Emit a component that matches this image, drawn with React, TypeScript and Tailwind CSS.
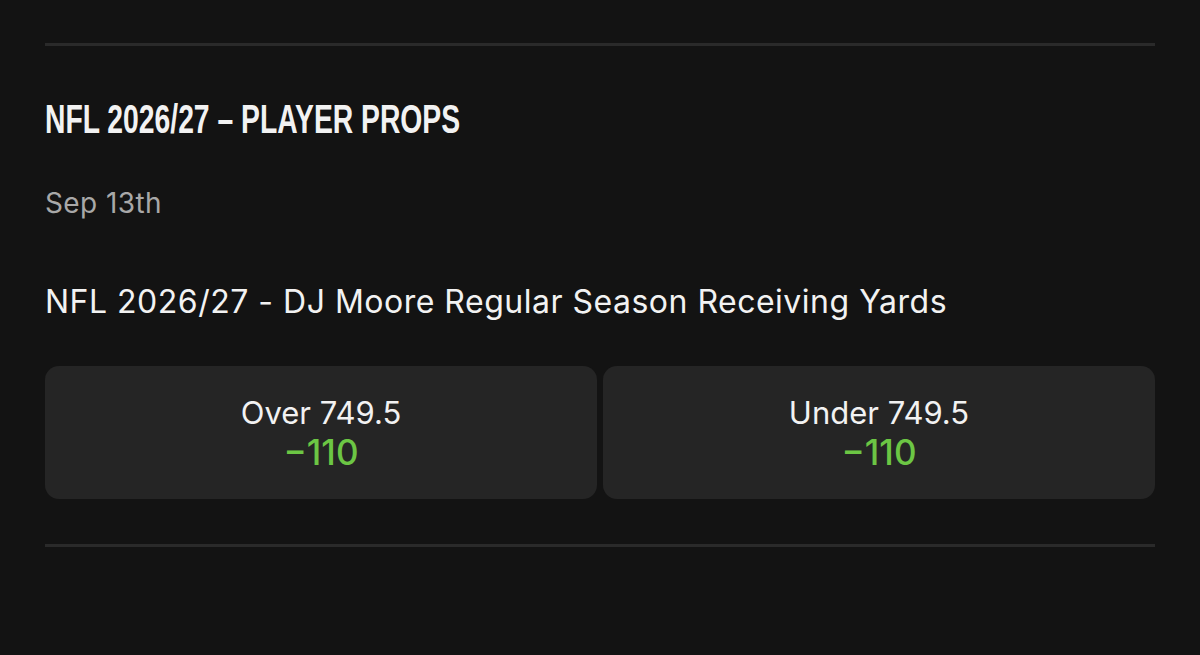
export default function App() {
  return (
    <div className="min-h-[655px] w-[1200px] bg-[#131313] px-[45px] pt-[43px] font-['Inter',sans-serif]">
      <div className="h-[3px] bg-[#2a2a2a]" />
      <h1 className="mt-[49px] origin-left scale-x-[0.69] whitespace-nowrap font-['Liberation_Sans','DejaVu_Sans',sans-serif] text-[41px] font-bold leading-[48px] text-[#f2f2f2]">
        NFL 2026/27 – PLAYER PROPS
      </h1>
      <p className="mt-[43px] text-[28px] leading-[34px] tracking-[0.4px] text-[#a8a8a8]">Sep 13th</p>
      <p className="mt-[62px] text-[32px] leading-[40px] tracking-[0.5px] text-[#f2f2f2]">
        NFL 2026/27 - DJ Moore Regular Season Receiving Yards
      </p>
      <div className="mt-[44px] grid grid-cols-2 gap-[6px]">
        {['Over 749.5', 'Under 749.5'].map((label) => (
          <button
            key={label}
            className="flex h-[133px] flex-col items-center justify-center rounded-[14px] bg-[#252525]"
          >
            <span className="text-[31px] leading-[38px] text-[#f2f2f2]">{label}</span>
            <span className="text-[35px] font-medium leading-[40px] text-[#6cc644]">−110</span>
          </button>
        ))}
      </div>
      <div className="mt-[45px] h-[3px] bg-[#2a2a2a]" />
    </div>
  );
}
